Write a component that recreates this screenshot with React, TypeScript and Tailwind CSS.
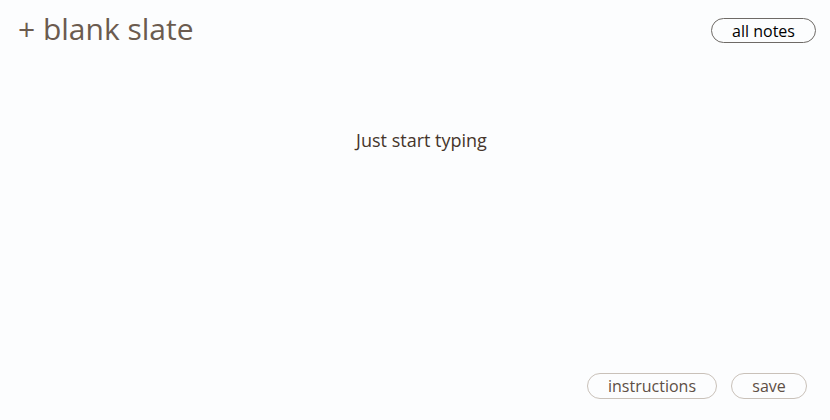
export default function App() {
  return (
    <div
      className="w-[830px] h-[420px] bg-[#fcfdfe] flex flex-col"
      style={{ fontFamily: '"Open Sans", sans-serif' }}
    >
      <div className="flex items-start justify-between pl-[18px] pr-[14px] pt-[10px]">
        <div className="text-[30px] leading-[38px] text-[#6b5b4f] font-medium">+ blank slate</div>
        <button className="mt-[8px] w-[105px] h-[25px] rounded-full border border-[#6e6a66] text-[16px] leading-none text-black font-medium flex items-center justify-center bg-transparent">
          all notes
        </button>
      </div>
      <div className="flex justify-center pt-[80px] pl-[13px]">
        <div className="text-[18px] leading-[24px] text-[#45352b] font-medium">Just start typing</div>
      </div>
      <div className="flex-1" />
      <div className="flex justify-end gap-[14px] pr-[23px] pb-[21px]">
        <button className="w-[130px] h-[26px] rounded-full border border-[#c9c1b9] text-[16px] leading-none text-[#5e4f45] font-medium flex items-center justify-center bg-transparent">
          instructions
        </button>
        <button className="w-[76px] h-[26px] rounded-full border border-[#c9c1b9] text-[16px] leading-none text-[#5e4f45] font-medium flex items-center justify-center bg-transparent">
          save
        </button>
      </div>
    </div>
  );
}
